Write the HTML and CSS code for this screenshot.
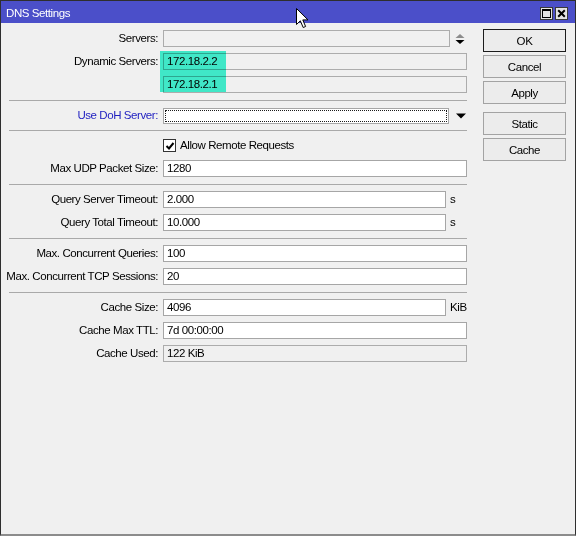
FILE: index.html
```html
<!DOCTYPE html>
<html>
<head>
<meta charset="utf-8">
<title>DNS Settings</title>
<link rel="stylesheet" href="styles.css">
</head>
<body>
<div class="window">
  <div class="titlebar">
    <span class="title">DNS Settings</span>
    <div class="tb-buttons">
      <svg class="tb-btn" width="13" height="13" viewBox="0 0 13 13"><rect x="0.5" y="0.5" width="12" height="12" fill="#e4e4e4" stroke="#3a3a3a"/><rect x="2.5" y="2.5" width="8" height="8" fill="none" stroke="#000"/><line x1="2" y1="3.5" x2="11" y2="3.5" stroke="#000"/></svg>
      <svg class="tb-btn" width="13" height="13" viewBox="0 0 13 13"><rect x="0.5" y="0.5" width="12" height="12" fill="#e4e4e4" stroke="#3a3a3a"/><path d="M3.2 3.2 L9.8 9.8 M9.8 3.2 L3.2 9.8" stroke="#000" stroke-width="2"/></svg>
    </div>
  </div>
  <div class="content">
    <div class="form">
      <div class="row">
        <div class="lbl">Servers:</div>
        <div class="field">
          <div class="input dis w-spin"></div>
          <svg class="spin" width="10" height="12" viewBox="0 0 10 12"><path d="M0.5 5 L5 1 L9.5 5 Z" fill="#8c8c8c"/><path d="M0.5 7 L9.5 7 L5 11 Z" fill="#000"/></svg>
        </div>
      </div>
      <div class="row">
        <div class="lbl">Dynamic Servers:</div>
        <div class="field"><div class="input dis w-full">172.18.2.2</div></div>
      </div>
      <div class="row">
        <div class="lbl"></div>
        <div class="field"><div class="input dis w-full">172.18.2.1</div></div>
      </div>
      <div class="sep"></div>
      <div class="row row-doh">
        <div class="lbl blue">Use DoH Server:</div>
        <div class="field">
          <div class="input focus w-doh"><div class="focus-ring"></div></div>
          <svg class="drop" width="10" height="6" viewBox="0 0 10 6"><path d="M0 0.5 L10 0.5 L5 5.5 Z" fill="#000"/></svg>
        </div>
      </div>
      <div class="sep"></div>
      <div class="row">
        <div class="lbl"></div>
        <div class="field">
          <span class="checkbox"><svg width="10" height="10" viewBox="0 0 10 10"><path d="M1.5 5 L4 7.5 L8.5 2" fill="none" stroke="#000" stroke-width="2"/></svg></span>
          <span class="check-text">Allow Remote Requests</span>
        </div>
      </div>
      <div class="row">
        <div class="lbl">Max UDP Packet Size:</div>
        <div class="field"><div class="input w-full">1280</div></div>
      </div>
      <div class="sep"></div>
      <div class="row">
        <div class="lbl">Query Server Timeout:</div>
        <div class="field"><div class="input w-unit">2.000</div><span class="unit">s</span></div>
      </div>
      <div class="row">
        <div class="lbl">Query Total Timeout:</div>
        <div class="field"><div class="input w-unit">10.000</div><span class="unit">s</span></div>
      </div>
      <div class="sep"></div>
      <div class="row">
        <div class="lbl">Max. Concurrent Queries:</div>
        <div class="field"><div class="input w-full">100</div></div>
      </div>
      <div class="row">
        <div class="lbl">Max. Concurrent TCP Sessions:</div>
        <div class="field"><div class="input w-full">20</div></div>
      </div>
      <div class="sep"></div>
      <div class="row">
        <div class="lbl">Cache Size:</div>
        <div class="field"><div class="input w-unit">4096</div><span class="unit">KiB</span></div>
      </div>
      <div class="row">
        <div class="lbl">Cache Max TTL:</div>
        <div class="field"><div class="input w-full">7d 00:00:00</div></div>
      </div>
      <div class="row">
        <div class="lbl">Cache Used:</div>
        <div class="field"><div class="input dis w-full">122 KiB</div></div>
      </div>
    </div>
    <div class="buttons">
      <div class="btn default">OK</div>
      <div class="btn">Cancel</div>
      <div class="btn gap">Apply</div>
      <div class="btn">Static</div>
      <div class="btn">Cache</div>
    </div>
  </div>
  <div class="highlight"></div>
  <svg class="cursor" width="14" height="21" viewBox="0 0 14 21"><path d="M0.5 0.5 L0.5 16.5 L4.3 12.8 L7.2 19.5 L9.6 18.5 L6.8 11.9 L12 11.9 Z" fill="#fff" stroke="#000" stroke-width="1" stroke-linejoin="miter"/></svg>
</div>
</body>
</html>
```
FILE: styles.css
```css
html, body {
  margin: 0;
  padding: 0;
  background: #f0f0f0;
}

.window {
  position: relative;
  width: 576px;
  height: 536px;
  box-sizing: border-box;
  border: 1px solid #2e2e2e;
  border-bottom: 2px solid #8c8c8c;
  background: #f0f0f0;
  font-family: "Liberation Sans", Arial, sans-serif;
  font-size: 11.5px;
  letter-spacing: -0.42px;
  color: #000;
  overflow: hidden;
}

.titlebar {
  height: 22px;
  background: #4b4fc9;
  color: #fff;
  display: flex;
  align-items: center;
  justify-content: space-between;
  padding: 0 7px 0 5px;
}

.title {
  line-height: 22px;
  padding-top: 1px;
}

.tb-buttons {
  display: flex;
  gap: 2px;
  padding-top: 2px;
}

.tb-btn {
  display: block;
}

.content {
  display: flex;
  padding: 7px 0 0 7px;
}

.form {
  display: flex;
  flex-direction: column;
  gap: 6px;
  width: 459px;
}

.row {
  display: grid;
  grid-template-columns: 150px 304px;
  column-gap: 5px;
  height: 17px;
  align-items: center;
}

.row-doh {
  height: 16px;
}

.lbl {
  display: flex;
  justify-content: flex-end;
  white-space: nowrap;
  line-height: 17px;
}

.blue {
  color: #1e1ec0;
}

.field {
  display: flex;
  align-items: center;
  height: 100%;
}

.input {
  flex: none;
  height: 17px;
  box-sizing: border-box;
  border: 1px solid #a6a6a6;
  background: #fff;
  padding: 0 3px;
  line-height: 15px;
  white-space: nowrap;
  overflow: hidden;
}

.input.dis {
  background: #f0f0f0;
  border-color: #acacac;
}

.input.focus {
  height: 16px;
  padding: 1px;
  background: #fff;
}

.focus-ring {
  height: 100%;
  box-sizing: border-box;
  border: 1px dotted #1a1a1a;
}

.w-full { width: 304px; }
.w-unit { width: 283px; }
.w-spin { width: 287px; }
.w-doh { width: 286px; }

.unit {
  margin-left: 4px;
  line-height: 17px;
}

.spin {
  margin-left: 5px;
  display: block;
}

.drop {
  margin-left: 7px;
  display: block;
}

.checkbox {
  width: 13px;
  height: 13px;
  box-sizing: border-box;
  border: 1px solid #333;
  background: #fff;
  display: flex;
  align-items: center;
  justify-content: center;
}

.checkbox svg {
  display: block;
}

.check-text {
  margin-left: 4px;
  line-height: 17px;
}

.sep {
  height: 1px;
  background: #a9a9a9;
  margin: 1px 0 0 1px;
  width: 458px;
}

.buttons {
  display: flex;
  flex-direction: column;
  margin-left: 16px;
  margin-top: -1px;
}

.btn {
  width: 83px;
  height: 23px;
  box-sizing: border-box;
  border: 1px solid #a3a3a3;
  background: #ececec;
  display: flex;
  align-items: center;
  justify-content: center;
  margin-bottom: 3px;
}

.btn.default {
  border-color: #1c1c1c;
}

.btn.gap {
  margin-bottom: 8px;
}

.highlight {
  position: absolute;
  left: 159px;
  top: 50px;
  width: 66px;
  height: 41px;
  background: #44f6d4;
  mix-blend-mode: multiply;
}

.cursor {
  position: absolute;
  left: 295px;
  top: 7px;
}
```
